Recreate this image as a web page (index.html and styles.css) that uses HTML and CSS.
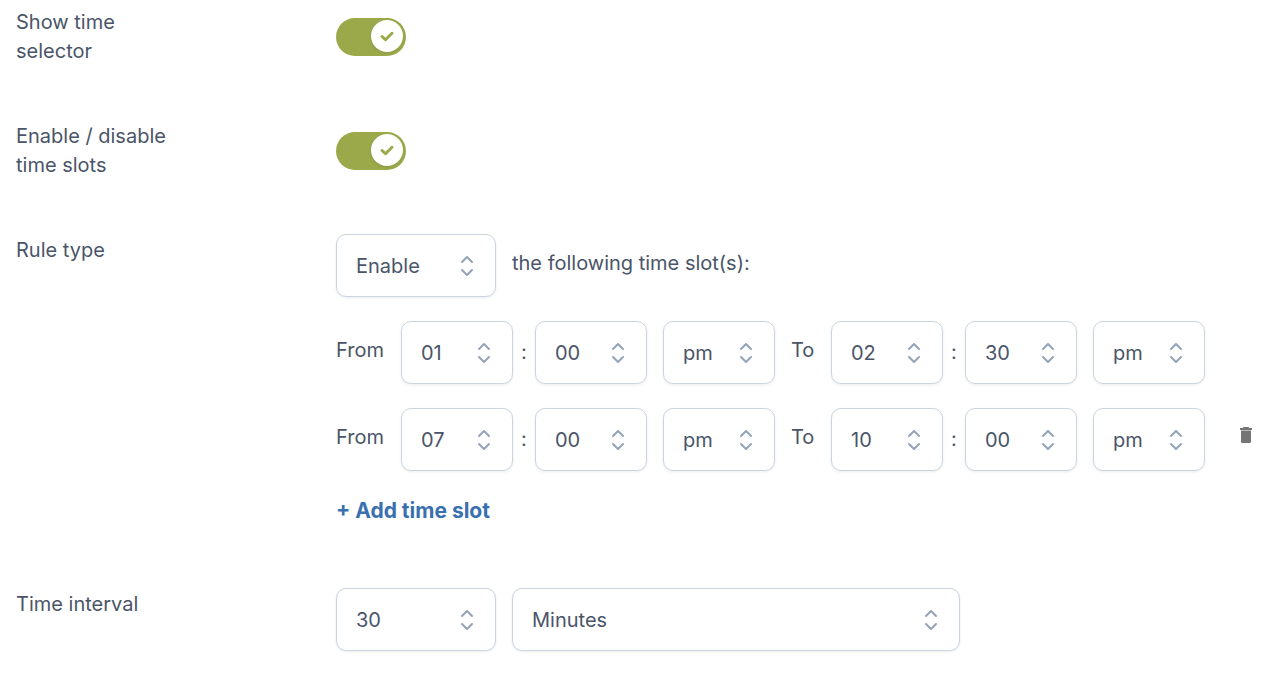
FILE: index.html
```html
<!DOCTYPE html>
<html lang="en">

<head>
  <meta charset="UTF-8">
  <meta name="viewport" content="width=device-width, initial-scale=1">
  <title>Time settings</title>
  <link rel="stylesheet" href="styles.css">
</head>

<body>

  <form class="settings">
    <div class="row">
      <label class="row-label" for="showTime">Show time selector</label>
      <div class="row-toggle">
        <input class="toggle" id="showTime" type="checkbox" checked>
      </div>
    </div>

    <div class="row">
      <label class="row-label" for="enableSlots">Enable / disable time slots</label>
      <div class="row-toggle">
        <input class="toggle" id="enableSlots" type="checkbox" checked>
      </div>
    </div>

    <div class="row">
      <label class="row-label" for="ruleType">Rule type</label>
      <div class="rules">
        <div class="line">
          <select class="medium" id="ruleType">
            <option>Enable</option>
            <option>Disable</option>
          </select>
          <span class="text">the following time slot(s):</span>
        </div>

        <div class="line">
          <label class="text from" for="fromHour1">From</label>
          <div class="time">
            <select id="fromHour1"><option>01</option></select>
            <span class="colon">:</span>
            <select aria-label="From minutes"><option>00</option><option>30</option></select>
          </div>
          <select aria-label="From am or pm"><option>pm</option><option>am</option></select>
          <label class="text to" for="toHour1">To</label>
          <div class="time">
            <select id="toHour1"><option>02</option></select>
            <span class="colon">:</span>
            <select aria-label="To minutes"><option>30</option><option>00</option></select>
          </div>
          <select aria-label="To am or pm"><option>pm</option><option>am</option></select>
        </div>

        <div class="line">
          <label class="text from" for="fromHour2">From</label>
          <div class="time">
            <select id="fromHour2"><option>07</option></select>
            <span class="colon">:</span>
            <select aria-label="From minutes"><option>00</option><option>30</option></select>
          </div>
          <select aria-label="From am or pm"><option>pm</option><option>am</option></select>
          <label class="text to" for="toHour2">To</label>
          <div class="time">
            <select id="toHour2"><option>10</option></select>
            <span class="colon">:</span>
            <select aria-label="To minutes"><option>00</option><option>30</option></select>
          </div>
          <select aria-label="To am or pm"><option>pm</option><option>am</option></select>
          <button class="delete" type="button" aria-label="Delete time slot">
            <svg width="14" height="18" viewBox="0 0 14 18" fill="#757575">
              <path d="M4.500 1h5l.8 1H13v2H1V2h2.700z" />
              <path d="M2 4.500h10v11a1.500 1.500 0 0 1-1.500 1.500h-7A1.500 1.500 0 0 1 2 15.500z" />
            </svg>
          </button>
        </div>

        <a class="add" href="#">+ Add time slot</a>
      </div>
    </div>

    <div class="row">
      <label class="row-label" for="interval">Time interval</label>
      <div class="line">
        <select class="medium" id="interval"><option>30</option><option>60</option></select>
        <select class="wide" aria-label="Interval unit"><option>Minutes</option><option>Hours</option></select>
      </div>
    </div>
  </form>

</body>

</html>
```

FILE: styles.css
```css
* {
  box-sizing: border-box;
}

body {
  margin: 0;
  background: #fff;
  color: #4a5568;
  font-family: Inter, sans-serif;
  font-size: 20px;
  line-height: 29px;
}

.settings {
  display: flex;
  flex-direction: column;
  gap: 54px;
  padding: 6px 16px 24px;
}

.row {
  display: grid;
  grid-template-columns: 160px 1fr;
  column-gap: 160px;
  align-items: start;
}

.row-label {
  padding-top: 2px;
}

.row-toggle {
  display: flex;
  padding-top: 12px;
}

.rules {
  display: flex;
  flex-direction: column;
  align-items: flex-start;
  gap: 24px;
  padding-bottom: 8px;
}

.line {
  display: flex;
  align-items: center;
  gap: 16px;
}

.text {
  padding-bottom: 4px;
}

.from {
  width: 49px;
}

.to {
  width: 24px;
}

.time {
  display: flex;
  align-items: center;
}

.colon {
  width: 22px;
  text-align: center;
}

select {
  appearance: none;
  width: 112px;
  height: 63px;
  padding: 2px 40px 0 19px;
  border: 1px solid #cbd5e0;
  border-radius: 10px;
  background: #fff url("data:image/svg+xml,%3Csvg xmlns='http://www.w3.org/2000/svg' width='14' height='22' fill='none' stroke='%2394a3b8' stroke-width='2' stroke-linecap='round' stroke-linejoin='round'%3E%3Cpath d='M2 7l5-5 5 5M2 15l5 5 5-5'/%3E%3C/svg%3E") no-repeat right 21px center;
  box-shadow: 0 1px 3px rgba(0, 0, 0, 0.08);
  color: inherit;
  font: inherit;
}

.medium {
  width: 160px;
}

.wide {
  width: 448px;
}

.toggle {
  appearance: none;
  width: 70px;
  height: 38px;
  margin: 0;
  padding: 2px 3px;
  border-radius: 19px;
  background: #cbd5e0;
  cursor: pointer;
}

.toggle::before {
  content: "";
  display: block;
  width: 32px;
  height: 32px;
  border-radius: 50%;
  background: #fff;
  box-shadow: 0 1px 3px rgba(0, 0, 0, 0.1);
}

.toggle:checked {
  background: #9ba94a;
}

.toggle:checked::before {
  margin-left: auto;
  background: #fff url("data:image/svg+xml,%3Csvg xmlns='http://www.w3.org/2000/svg' width='16' height='16' fill='none' stroke='%239ba94a' stroke-width='3' stroke-linecap='round' stroke-linejoin='round'%3E%3Cpath d='M3 8.500l3.500 3.200 6.500-6.400'/%3E%3C/svg%3E") no-repeat center;
}

.delete {
  display: flex;
  margin-left: 18px;
  padding: 0 0 10px;
  border: none;
  background: none;
  cursor: pointer;
}

.add {
  color: #3a6fb0;
  font-size: 21px;
  font-weight: 700;
  line-height: 31px;
  text-decoration: none;
}
```
